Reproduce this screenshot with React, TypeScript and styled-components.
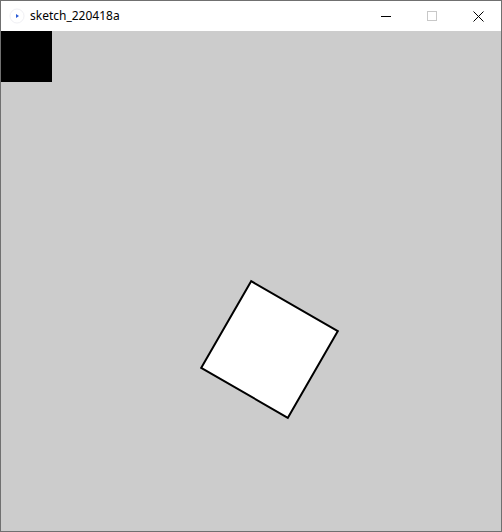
import React from 'react';
import styled, { createGlobalStyle } from 'styled-components';

const GlobalStyle = createGlobalStyle`
  html, body {
    margin: 0;
    padding: 0;
    background: #fff;
  }
`;

const Window = styled.div`
  display: flex;
  flex-direction: column;
  width: 502px;
  height: 532px;
  box-sizing: border-box;
  border: 1px solid #707070;
  background: #fff;
  overflow: hidden;
`;

const TitleBar = styled.div`
  display: flex;
  align-items: center;
  height: 30px;
  flex-shrink: 0;
  background: #fff;
`;

const AppIcon = styled.div`
  display: flex;
  align-items: center;
  justify-content: center;
  width: 16px;
  height: 16px;
  margin-left: 8px;
  margin-right: 5px;
`;

const Title = styled.span`
  flex: 1;
  font-family: 'Noto Sans', 'Open Sans', sans-serif;
  font-size: 12px;
  color: #000;
  line-height: 30px;
  padding-bottom: 1px;
`;

const Controls = styled.div`
  display: flex;
  height: 30px;
`;

const ControlButton = styled.div`
  display: flex;
  align-items: center;
  justify-content: center;
  width: 46px;
  height: 30px;
`;

const Canvas = styled.div`
  width: 500px;
  height: 500px;
  background: #cccccc;
`;

const Sketch = () => (
  <svg width="500" height="500" viewBox="0 0 500 500">
    <rect x="0" y="0" width="51" height="51" fill="#000" />
    <rect
      x="-50"
      y="-50"
      width="100"
      height="100"
      fill="#fff"
      stroke="#000"
      strokeWidth="2"
      transform="translate(268.5 318.5) rotate(30)"
    />
  </svg>
);

export default function App() {
  return (
    <>
      <GlobalStyle />
      <Window>
        <TitleBar>
          <AppIcon>
            <svg width="16" height="16" viewBox="0 0 16 16">
              <circle cx="8" cy="8" r="7" fill="#fff" stroke="#f0f0f4" strokeWidth="1" />
              <path d="M7 6 L10 8 L7 10 Z" fill="#2a5bd7" />
            </svg>
          </AppIcon>
          <Title>sketch_220418a</Title>
          <Controls>
            <ControlButton>
              <svg width="10" height="10" viewBox="0 0 10 10">
                <path d="M0 5.5 H10" stroke="#000" strokeWidth="1" />
              </svg>
            </ControlButton>
            <ControlButton>
              <svg width="10" height="10" viewBox="0 0 10 10">
                <rect x="0.5" y="0.5" width="9" height="9" fill="none" stroke="#c8c8c8" strokeWidth="1" />
              </svg>
            </ControlButton>
            <ControlButton>
              <svg width="11" height="11" viewBox="0 0 11 11">
                <path d="M0.5 0.5 L10.5 10.5 M10.5 0.5 L0.5 10.5" stroke="#000" strokeWidth="1" />
              </svg>
            </ControlButton>
          </Controls>
        </TitleBar>
        <Canvas>
          <Sketch />
        </Canvas>
      </Window>
    </>
  );
}
